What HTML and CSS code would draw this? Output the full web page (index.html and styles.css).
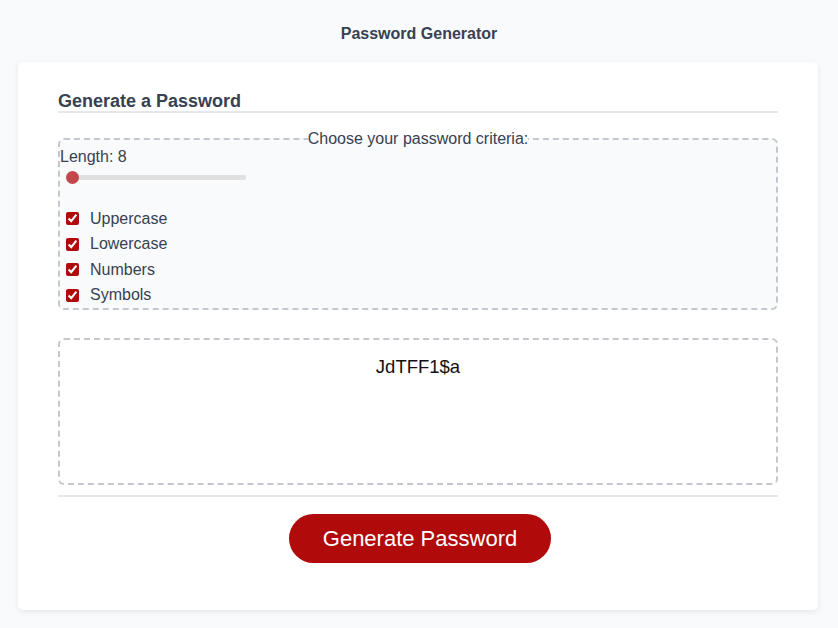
FILE: index.html
```html
<!DOCTYPE html>
<html lang="en">
<head>
<meta charset="utf-8">
<title>Password Generator</title>
<link rel="stylesheet" href="styles.css">
</head>
<body>
  <h1 class="page-title">Password Generator</h1>
  <main class="card">
    <h2 class="card-header">Generate a Password</h2>
    <fieldset class="criteria">
      <legend class="criteria-legend">Choose your password criteria:</legend>
      <div class="length-label">Length: 8</div>
      <input class="length-range" type="range" min="8" max="128" value="8">
      <div class="options">
        <label class="option"><input class="check" type="checkbox" checked><span>Uppercase</span></label>
        <label class="option"><input class="check" type="checkbox" checked><span>Lowercase</span></label>
        <label class="option"><input class="check" type="checkbox" checked><span>Numbers</span></label>
        <label class="option"><input class="check" type="checkbox" checked><span>Symbols</span></label>
      </div>
    </fieldset>
    <div class="output">JdTFF1$a</div>
    <div class="footer">
      <button class="generate" type="button">Generate Password</button>
    </div>
  </main>
</body>
</html>
```
FILE: styles.css
```css
* { box-sizing: border-box; }
html, body { margin: 0; padding: 0; }
body {
  background: #f9fafb;
  font-family: "Liberation Sans", Arial, sans-serif;
  color: #374151;
  width: 838px;
  height: 628px;
  overflow: hidden;
}
.page-title {
  margin: 0;
  padding-top: 25px;
  height: 62px;
  font-size: 16px;
  line-height: 18px;
  font-weight: bold;
  text-align: center;
  color: #374151;
}
.card {
  margin: 0 18px;
  width: 800px;
  height: 548px;
  background: #ffffff;
  border-radius: 5px;
  box-shadow: 0 2px 6px rgba(0, 0, 0, 0.08);
  padding: 29px 40px 0;
}
.card-header {
  margin: 0;
  font-size: 18px;
  line-height: 20px;
  font-weight: bold;
  color: #374151;
  border-bottom: 2px solid #e5e7eb;
}
.criteria {
  margin: 17px 0 0;
  padding: 0;
  border: 2px dashed #c4c8ce;
  border-radius: 6px;
  background: #f9fafb;
  min-width: 0;
}
.criteria-legend {
  margin: 0 auto;
  padding: 0;
  font-size: 16px;
  line-height: 18px;
  color: #374151;
}
.length-label {
  font-size: 16px;
  line-height: 18px;
  margin-top: 0;
}
.length-range {
  -webkit-appearance: none;
  appearance: none;
  display: block;
  width: 180px;
  height: 13px;
  margin: 5px 0 0 6px;
  background: transparent;
}
.length-range::-webkit-slider-runnable-track {
  height: 5px;
  background: #e0e0e0;
  border-radius: 3px;
}
.length-range::-webkit-slider-thumb {
  -webkit-appearance: none;
  appearance: none;
  width: 13px;
  height: 13px;
  margin-top: -4px;
  border-radius: 50%;
  background: #c4474b;
  border: none;
}
.options {
  margin-top: 22px;
  display: flex;
  flex-direction: column;
}
.option {
  display: flex;
  align-items: center;
  height: 25.5px;
  font-size: 16px;
  color: #374151;
}
.check {
  margin: 0 11px 0 6px;
  width: 13px;
  height: 13px;
  accent-color: #b00a0a;
}
.output {
  margin-top: 28px;
  height: 147px;
  border: 2px dashed #c4c8ce;
  border-radius: 6px;
  padding-top: 16px;
  text-align: center;
  font-size: 18.5px;
  line-height: 21px;
  color: #111111;
}
.footer {
  margin-top: 10px;
  border-top: 2px solid #e5e7eb;
  padding-top: 17px;
  display: flex;
  justify-content: center;
}
.generate {
  width: 262px;
  height: 49px;
  margin-left: 4px;
  border: none;
  border-radius: 25px;
  background: #b00a0a;
  color: #ffffff;
  font-family: "Liberation Sans", Arial, sans-serif;
  font-size: 22px;
  cursor: pointer;
}
```
